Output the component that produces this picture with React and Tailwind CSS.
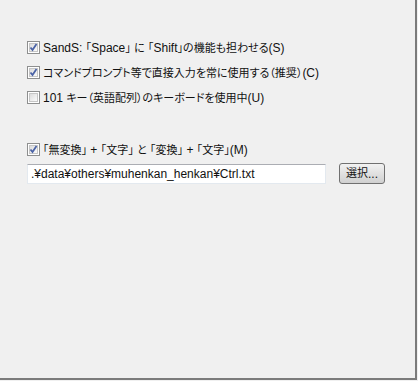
import React from "react";

function JText({ text }) {
  const parts = text.split(/([\u3000-\u30ff\u4e00-\u9fff\uff00-\uffef]+)/);
  return (
    <>
      {parts.map((p, i) =>
        i % 2 === 1 ? (
          <span key={i} className="text-[11px]">{p}</span>
        ) : (
          <span key={i}>{p}</span>
        )
      )}
    </>
  );
}

function Check({ checked }) {
  return (
    <span className="relative w-[13px] h-[13px] shrink-0 border border-[#8e8f8f] bg-white flex items-center justify-center">
      <span className="w-[9px] h-[9px] border border-[#c6c6c6] bg-gradient-to-br from-[#dcdcdc] to-[#fbfbfb] flex items-center justify-center">
        {checked && (
          <svg width="9" height="9" viewBox="0 0 9 9" className="absolute left-[1px] top-[1px]">
            <path d="M1.5 4.5 L3.5 7 L7.5 1" fill="none" stroke="#4b63a6" strokeWidth="1.8" />
          </svg>
        )}
      </span>
    </span>
  );
}

function Row({ checked, text }) {
  return (
    <div className="h-[25px] flex items-center gap-[3px]">
      <Check checked={checked} />
      <span className="text-[12px] text-[#111] whitespace-nowrap leading-none">
        <JText text={text} />
      </span>
    </div>
  );
}

export default function App() {
  return (
    <div
      className="w-[418px] h-[381px] bg-[#f0f0f0] [font-feature-settings:'palt']"
      style={{ fontFamily: '"Liberation Sans", "Noto Sans CJK JP", sans-serif' }}
    >
      <div className="w-[417px] h-[380px] border-r-2 border-b-2 border-[#7b7b7b] pl-[27px] pt-[35px] flex flex-col">
        <Row checked text="SandS: ｢Space｣ に ｢Shift｣の機能も担わせる(S)" />
        <Row checked text="コマンドプロンプト等で直接入力を常に使用する（推奨）(C)" />
        <Row checked={false} text="101 キー（英語配列）のキーボードを使用中(U)" />
        <div className="mt-[27px]">
          <Row checked text="｢無変換｣ + ｢文字｣ と ｢変換｣ + ｢文字｣(M)" />
        </div>
        <div className="flex items-center mt-[1px] gap-[13px]">
          <div className="w-[299px] h-[20px] bg-white border border-[#e3e9ef] border-t-[#abadb3] flex items-center px-[3px] text-[12px] text-[#111] whitespace-nowrap leading-none">
            .¥data¥others¥muhenkan_henkan¥Ctrl.txt
          </div>
          <button className="w-[46px] h-[21px] rounded-[3px] border border-[#707070] bg-gradient-to-b from-[#f2f2f2] to-[#d0d0d0] text-[12px] text-[#111] leading-none flex items-center justify-center">
            <JText text="選択..." />
          </button>
        </div>
      </div>
    </div>
  );
}
